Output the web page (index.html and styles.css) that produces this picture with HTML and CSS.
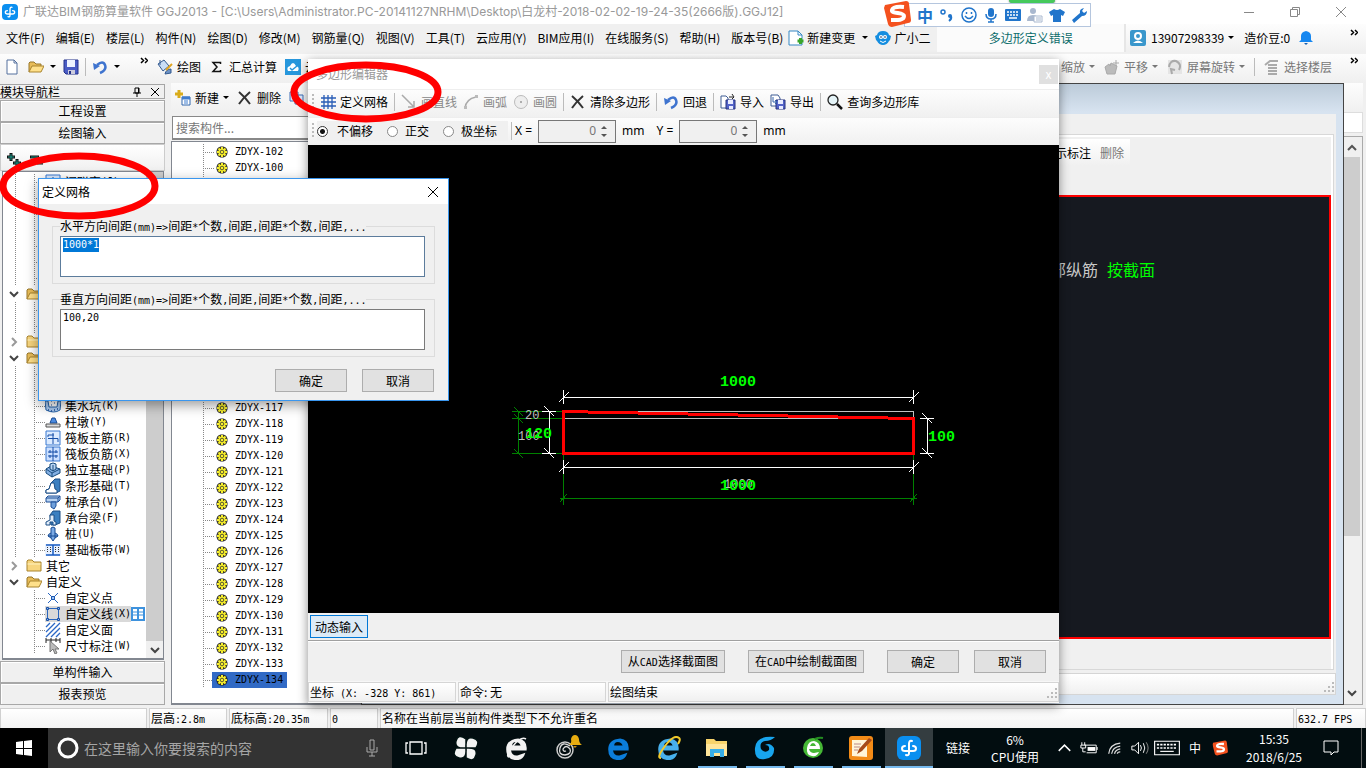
FILE: index.html
```html
<!DOCTYPE html>
<html lang="zh-CN">
<head>
<meta charset="utf-8">
<title>广联达BIM钢筋算量软件 GGJ2013</title>
<link rel="stylesheet" href="styles.css">
</head>
<body>
<svg class="defs" aria-hidden="true">
  <symbol id="gear" viewBox="0 0 16 16"><path d="M8 2.500v11M2.500 8h11M4 4l8 8M12 4l-8 8" stroke="#222" stroke-width="3.600"/><circle cx="8" cy="8" r="4.500" fill="#222"/><path d="M8 3v10M3 8h10M4.500 4.500l7 7M11.500 4.500l-7 7" stroke="#f7ef2c" stroke-width="2"/><circle cx="8" cy="8" r="3.600" fill="#f7ef2c"/><circle cx="8" cy="8" r="1.800" fill="none" stroke="#333" stroke-width=".8"/></symbol>
  <symbol id="fopen" viewBox="0 0 16 16"><path d="M1 13V4l1-1h4l2 2h5v3" fill="#e8bc58" stroke="#97762a"/><path d="M1 13l3-6h12l-3 6z" fill="#ffe08a" stroke="#a9842e"/></symbol>
  <symbol id="fclosed" viewBox="0 0 16 16"><path d="M1 13V3l1-1h4l2 2h7v9z" fill="#f7d57e" stroke="#a9842e"/><path d="M1.500 6h13" stroke="#fff2c0"/></symbol>
  <symbol id="down" viewBox="0 0 10 10"><path d="M1 3l4 4 4-4" fill="none" stroke="#444" stroke-width="2"/></symbol>
  <symbol id="right" viewBox="0 0 10 10"><path d="M3 1l4 4-4 4" fill="none" stroke="#999" stroke-width="2"/></symbol>
  <symbol id="up" viewBox="0 0 10 10"><path d="M1 7l4-4 4 4" fill="none" stroke="#555" stroke-width="2"/></symbol>
  <symbol id="caret" viewBox="0 0 6 4"><path d="M0 0h6L3 3z" fill="currentColor"/></symbol>
  <symbol id="more" viewBox="0 0 8 7"><path d="M1 1l2.500 2.500L1 6M5 1l2.500 2.500L5 6" fill="none" stroke="#000" stroke-width="1.500"/></symbol>
  <symbol id="cross" viewBox="0 0 16 16"><path d="M2 2q6 5 11 12M13 2Q6 8 2 14" fill="none" stroke="#333" stroke-width="2"/></symbol>
  <symbol id="undo" viewBox="0 0 16 16"><path d="M5 6q6-5 8 0t-5 8" fill="none" stroke="#3f74cf" stroke-width="2.500"/><path d="M1 4l1 7 6-4z" fill="#3f74cf"/></symbol>
  <symbol id="disk" viewBox="0 0 16 16"><path d="M1 1h14v14H3l-2-2z" fill="#4a5cc4" stroke="#23308a"/><path d="M4 1h8v7H4z" fill="#eef3ff"/><path d="M5 11h7v4H5z" fill="#ccd"/><path d="M6 12h2v3H6z" fill="#23308a"/></symbol>
  <symbol id="glo" viewBox="0 0 24 24"><rect width="24" height="24" rx="6" fill="#0a8ff0"/><path d="M15 5q-3-1-3 3v9q0 3-3 2M8 10q-3 0-3 2.500T8 15h8q3 0 3-2.500T16 10" fill="none" stroke="#fff" stroke-width="2" stroke-linecap="round"/></symbol>
  <symbol id="pit" viewBox="0 0 16 16"><path d="M0 3h3l1 6h8l1-6h3l-1 9q-6 4-14 0z" fill="#a9c8ee" stroke="#2563a8"/><path d="M3 12h1M6 13h1M9 12h1M12 11h1" stroke="#1b4c96" stroke-width="1.500"/><path d="M6 3h1M9 5h1M6 7h1" stroke="#1b4c96"/></symbol>
  <symbol id="pier" viewBox="0 0 16 16"><path d="M5 9l2-5h3l2 5z" fill="#4c8be0" stroke="#174a93"/><path d="M1 10h14v3H1z" fill="#ddd" stroke="#555"/></symbol>
  <symbol id="rebar" viewBox="0 0 16 16"><path d="M1 1h14v14H1z" fill="#dcebff" stroke="#3878d0"/><path d="M8 3v11M3 7v-2h6M3 8.500h10V12" fill="none" stroke="#164fa8"/></symbol>
  <symbol id="rebar2" viewBox="0 0 16 16"><path d="M1 1h14v14H1z" fill="#cce0ff" stroke="#3878d0"/><path d="M8 1v14M3 6h10M3 10h10M5 4v3M11 9v3M11 4v3M5 9v3" stroke="#164fa8"/></symbol>
  <symbol id="isolated" viewBox="0 0 16 16"><path d="M1 7l5-3 9 3v4l-8 4-6-4z" fill="#82afe3" stroke="#174a7d"/><path d="M1 7l6 4 8-4M7 11v4" fill="none" stroke="#174a7d"/><path d="M5 2l3-1 3 1v5l-3 2-3-2z" fill="#b8d4f3" stroke="#174a7d"/><path d="M8 3v6" stroke="#174a7d"/></symbol>
  <symbol id="strip" viewBox="0 0 16 16"><path d="M1 15v-3l3-1 2-6 4-4h5v12l-4 2z" fill="#3b7fc0" stroke="#1c4f86"/><path d="M1 15v-3l3-1 2-6h3l1 6 2 1v3z" fill="#fff" stroke="#1c4f86"/></symbol>
  <symbol id="beam" viewBox="0 0 16 16"><path d="M5 5l3-4h7v12l-5 2H6z" fill="#3b7fc0" stroke="#1c4f86"/><path d="M1 15v-3l4-2V5h4v6l2 1v3H8v-3H5v3z" fill="#e3eefa" stroke="#1c4f86"/></symbol>
  <symbol id="cap" viewBox="0 0 16 16"><path d="M1 4l2-2h12v4l-2 2H1z" fill="#b7d2f1" stroke="#1c4f98"/><path d="M1 4h12l2-2M13 4v4" fill="none" stroke="#1c4f98"/><path d="M6 8h5v4l-2 3-3-2z" fill="#6fa0dc" stroke="#1c4f98"/></symbol>
  <symbol id="pile" viewBox="0 0 16 16"><path d="M6 2q2-2 4 0v5q3 1 3 3l-3 2-2 3-2-3-3-2q0-2 3-3z" fill="#7aa9e4" stroke="#174a93"/><path d="M6 7v5M10 7v5M3 10h10" stroke="#174a93"/></symbol>
  <symbol id="band" viewBox="0 0 16 16"><path d="M0 2h16v12H0z" fill="#e6f0ff"/><path d="M1 3h14M1 13h14M8 3v10" stroke="#195bc2" stroke-width="1.500"/><path d="M2.500 5v6M5.500 5v6M10.500 5v6M13.500 5v6" stroke="#333" stroke-dasharray="1 1"/></symbol>
  <symbol id="point" viewBox="0 0 16 16"><path d="M3 3l10 10M13 3L3 13" stroke="#2865bf"/><path d="M6.500 6.500h3v3h-3z" fill="#9cc4f5" stroke="#1c57b0"/></symbol>
  <symbol id="poly" viewBox="0 0 16 16"><path d="M2.500 2.500h11v11h-11z" fill="none" stroke="#2b66bd"/><path d="M1.500 1.500h2v2h-2zM12.500 1.500h2v2h-2zM1.500 12.500h2v2h-2zM12.500 12.500h2v2h-2z" fill="#8db8ef" stroke="#174fa5"/></symbol>
  <symbol id="hatch" viewBox="0 0 16 16"><path d="M1 5l4-4M1 10l9-9M1 15L15 1M6 15l9-9M11 15l4-4" stroke="#2a67c5" stroke-width="1.300"/></symbol>
  <symbol id="dim" viewBox="0 0 16 16"><path d="M1 0v5M15 0v5M1 2h14M6 0v4M11 0v4" stroke="#222"/><path d="M5 3v11l3-3 2 5 2-1-2-4h4z" fill="#bbb" stroke="#777"/></symbol>
  <symbol id="sogou" viewBox="0 0 28 28"><path d="M1 5L22 1q3 0 3 3l2 16q0 3-3 3L8 27q-3 0-4-3L0 8z" fill="#f4511e"/><path d="M20 7q-11-1-12 3c-1 4 12 2 12 6 0 5-9 4-13 4" fill="none" stroke="#fff" stroke-width="4"/></symbol>
  <symbol id="ie" viewBox="2 2 20 20"><path d="M20 14H7q1 5 6 4l6-2q-2 7-9 6-7-1-7-9T13 4q8 1 7 10zM8 10h7q-1-3-4-3t-3 3" fill="currentColor" fill-rule="evenodd"/></symbol>
</svg>

<div class="desktop">
<main class="app">
  <header class="titlebar">
    <svg class="i16"><use href="#glo"/></svg>
    <span class="title">广联达BIM钢筋算量软件 GGJ2013 - [C:\Users\Administrator.PC-20141127NRHM\Desktop\白龙村-2018-02-02-19-24-35(2666版).GGJ12]</span>
    <div class="wincontrols">
      <button aria-label="最小化"><svg viewBox="0 0 12 12"><path d="M1 6.500h10"/></svg></button>
      <button aria-label="还原"><svg viewBox="0 0 12 12"><path d="M1.500 3.500h7v7h-7zM3.500 3V1.500h7v7H9"/></svg></button>
      <button aria-label="关闭"><svg viewBox="0 0 12 12"><path d="M1 1l10 10M11 1L1 11"/></svg></button>
    </div>
  </header>

  <nav class="menubar">
    <div class="menus">
      <button>文件(F)</button><button>编辑(E)</button><button>楼层(L)</button><button>构件(N)</button><button>绘图(D)</button><button>修改(M)</button><button>钢筋量(Q)</button><button>视图(V)</button><button>工具(T)</button><button>云应用(Y)</button><button>BIM应用(I)</button><button>在线服务(S)</button><button>帮助(H)</button><button>版本号(B)</button>
    </div>
    <button class="ic"><svg class="i16" viewBox="0 0 16 16"><path d="M1 1h9l4 4v10H1z" fill="#fff" stroke="#3688c4"/><path d="M10 1v4h4" fill="none" stroke="#3688c4"/><path d="M9.500 11h6M12.500 8v6" stroke="#39a52b" stroke-width="3"/></svg>新建变更<svg class="caret"><use href="#caret"/></svg></button>
    <button class="ic"><svg class="i16" viewBox="0 0 16 16"><path d="M0 6l2-1q1-4 6-4t6 4l2 1-1 4-1 1q-2 4-6 4t-6-4l-1-1z" fill="#158ee0"/><circle cx="6" cy="7" r="2" fill="#fff"/><circle cx="10" cy="7" r="2" fill="#fff"/><circle cx="6" cy="7" r=".8" fill="#124"/><circle cx="10" cy="7" r=".8" fill="#124"/><path d="M5 11q3 3 6 0" stroke="#fff" fill="none"/></svg>广小二</button>
    <div class="notice"><a href="#notice">多边形定义错误</a></div>
    <div class="account">
      <svg class="i16" viewBox="0 0 16 16"><rect width="16" height="16" rx="2" fill="#3a97cc"/><circle cx="8" cy="6" r="3" fill="none" stroke="#fff" stroke-width="2"/><path d="M3 13q5-5 10 0z" fill="#fff"/></svg>
      <button>13907298339</button><svg class="caret"><use href="#caret"/></svg><span class="beans">造价豆:0</span>
      <svg class="i16" viewBox="0 0 16 16"><path d="M3 10V6q0-4 5-5 5 1 5 5v4l2 2H1z" fill="#1687f0"/><path d="M6 13h4l-2 2z" fill="#1461b5"/></svg>
      <svg class="more"><use href="#more"/></svg>
    </div>
  </nav>

  <div class="toolbar">
    <svg class="i16" viewBox="0 0 16 16"><path d="M3 1h7l3 3v11H3z" fill="#fff" stroke="#55709e"/><path d="M10 1v3h3" fill="none" stroke="#55709e"/></svg>
    <svg class="i16 tb-open" ><use href="#fopen"/></svg><svg class="caret tb-c"><use href="#caret"/></svg>
    <svg class="i16 tb-save"><use href="#disk"/></svg><i class="sep"></i>
    <svg class="i16 tb-undo"><use href="#undo"/></svg><svg class="caret tb-c"><use href="#caret"/></svg>
    <svg class="more tb-more"><use href="#more"/></svg>
    <button class="ic"><svg class="i16" viewBox="0 0 16 16"><path d="M1 5l6-4 5 6-6 5z" fill="#c9def7" stroke="#32598f"/><path d="M3 1v5M8 15q1-5 6-5v4z" fill="#6d92c5" stroke="#32598f"/><path d="M9 11l6-6" stroke="#e1a521" stroke-width="2"/></svg>绘图</button>
    <button class="ic"><svg class="i16" viewBox="0 0 16 16"><path d="M11.500 5V3.500H4l4 4.500-4 4.500h7.500V11" fill="none" stroke="#111" stroke-width="1.500"/></svg>汇总计算</button>
    <button class="ic"><svg class="i16" viewBox="0 0 16 16"><rect width="16" height="16" fill="#2797dc"/><path d="M3 12q-2-4 2-5 3-6 6 0 4 1 2 5z" fill="#fff"/><path d="M5 9l2 2 5-4" fill="none" stroke="#2797dc" stroke-width="1.500"/></svg>云检查</button>
    <div class="viewtools">
      <button>缩放<svg class="caret"><use href="#caret"/></svg></button>
      <button><svg class="i16" viewBox="0 0 16 16"><path d="M3 15L1 8l4-3 1 2 1-3 6 3-2 8zM12 1v6M9 4h6" fill="#bbb" stroke="#aaa"/></svg>平移<svg class="caret"><use href="#caret"/></svg></button>
      <button><svg class="i16" viewBox="0 0 16 16"><path d="M1 1h14v14H1z" fill="#e5e5e5"/><path d="M2 8q1-7 7-6 6 3 3 9M5 15l-1-5 4 1" fill="none" stroke="#aaa" stroke-width="2"/></svg>屏幕旋转<svg class="caret"><use href="#caret"/></svg></button>
      <i class="sep"></i>
      <button><svg class="i16" viewBox="0 0 16 16"><path d="M1 6l5-4h8M4 6h9M4 9h9M4 12h9M4 15h9" fill="none" stroke="#aaa" stroke-width="2"/></svg>选择楼层</button>
      <svg class="more"><use href="#more"/></svg>
    </div>
  </div>

  <section class="work">
    <aside class="nav">
      <div class="navhead"><h2>模块导航栏</h2><svg class="i10" viewBox="0 0 10 10"><path d="M3 1h4v5H3zM1 6h8M5 6v4M6.500 1v5" fill="none" stroke="#000"/></svg><svg class="i10" viewBox="0 0 10 10"><path d="M1 1l8 8M9 1L1 9" stroke="#000"/></svg></div>
      <button class="bar">工程设置</button>
      <button class="bar">绘图输入</button>
      <div class="treetools"><svg viewBox="0 0 36 16"><path d="M0 5h8M4 1v8M6 11h8M10 7v8M23 5h9M30 11h9" stroke="#111" stroke-width="3"/><path d="M1 5h6M4 2v6M7 11h6M10 8v6M24 5h7M31 11h7" stroke="#169a8a"/></svg></div>
      <div class="treebox">
        <ul class="tree">
          <li class="leaf"><svg><use href="#rebar"/></svg>间联窗<span class="m">(J)</span></li>
          <li class="leaf"></li><li class="leaf"></li><li class="leaf"></li><li class="leaf"></li><li class="leaf"></li><li class="leaf end"></li>
          <li class="branch"><svg class="ch"><use href="#down"/></svg><svg><use href="#fopen"/></svg></li>
          <li class="leaf"></li><li class="leaf end"></li>
          <li class="branch"><svg class="ch"><use href="#right"/></svg><svg><use href="#fclosed"/></svg></li>
          <li class="branch"><svg class="ch"><use href="#down"/></svg><svg><use href="#fopen"/></svg></li>
          <li class="leaf"></li><li class="leaf"></li>
          <li class="leaf"><svg><use href="#pit"/></svg>集水坑<span class="m">(K)</span></li>
          <li class="leaf"><svg><use href="#pier"/></svg>柱墩<span class="m">(Y)</span></li>
          <li class="leaf"><svg><use href="#rebar"/></svg>筏板主筋<span class="m">(R)</span></li>
          <li class="leaf"><svg><use href="#rebar2"/></svg>筏板负筋<span class="m">(X)</span></li>
          <li class="leaf"><svg><use href="#isolated"/></svg>独立基础<span class="m">(P)</span></li>
          <li class="leaf"><svg><use href="#strip"/></svg>条形基础<span class="m">(T)</span></li>
          <li class="leaf"><svg><use href="#cap"/></svg>桩承台<span class="m">(V)</span></li>
          <li class="leaf"><svg><use href="#beam"/></svg>承台梁<span class="m">(F)</span></li>
          <li class="leaf"><svg><use href="#pile"/></svg>桩<span class="m">(U)</span></li>
          <li class="leaf end"><svg><use href="#band"/></svg>基础板带<span class="m">(W)</span></li>
          <li class="branch"><svg class="ch"><use href="#right"/></svg><svg><use href="#fclosed"/></svg>其它</li>
          <li class="branch"><svg class="ch"><use href="#down"/></svg><svg><use href="#fopen"/></svg>自定义</li>
          <li class="leaf last"><svg><use href="#point"/></svg>自定义点</li>
          <li class="leaf last sel"><span class="pick"><svg><use href="#poly"/></svg>自定义线<span class="m">(X)</span></span><svg class="cols" viewBox="0 0 14 14"><path d="M0 0h14v14H0z" fill="#3e92dd"/><path d="M2 2h4v10H2zM8 2h4v10H8z" fill="#fff"/><path d="M2 5h4M2 8h4M8 5h4M8 8h4" stroke="#3e92dd"/></svg></li>
          <li class="leaf last"><svg><use href="#hatch"/></svg>自定义面</li>
          <li class="leaf last end"><svg><use href="#dim"/></svg>尺寸标注<span class="m">(W)</span></li>
        </ul>
        <div class="scroll"><div class="thumb"></div><svg class="i10"><use href="#down"/></svg></div>
      </div>
      <button class="bar">单构件输入</button>
      <button class="bar">报表预览</button>
    </aside>

    <section class="parts">
      <div class="parttools">
        <button class="ic"><svg class="i16" viewBox="0 0 16 16"><path d="M4 0v8M0 4h8" stroke="#d9ac1b" stroke-width="3"/><path d="M7 7h8v8H7z" fill="#fff" stroke="#3166ad"/><path d="M7 8h8" stroke="#3d7cd0" stroke-width="3"/><path d="M9 11h4M9 13h4" stroke="#3d7cd0"/></svg>新建<svg class="caret"><use href="#caret"/></svg></button>
        <button class="ic"><svg class="i16"><use href="#cross"/></svg>删除</button>
        <button class="ic"><svg class="i16" viewBox="0 0 16 16"><path d="M1 2h8v9H1zM6 5h8v9H6z" fill="#dce9fb" stroke="#3d6fb8"/></svg>复制</button>
      </div>
      <input class="search" aria-label="搜索构件" placeholder="搜索构件...">
      <ul class="list">
        <li><svg><use href="#gear"/></svg><span>ZDYX-102</span></li><li><svg><use href="#gear"/></svg><span>ZDYX-100</span></li>
        <li></li><li></li><li></li><li></li><li></li><li></li><li></li><li></li><li></li><li></li><li></li><li></li><li></li><li></li>
        <li><svg><use href="#gear"/></svg><span>ZDYX-117</span></li><li><svg><use href="#gear"/></svg><span>ZDYX-118</span></li>
        <li><svg><use href="#gear"/></svg><span>ZDYX-119</span></li><li><svg><use href="#gear"/></svg><span>ZDYX-120</span></li>
        <li><svg><use href="#gear"/></svg><span>ZDYX-121</span></li><li><svg><use href="#gear"/></svg><span>ZDYX-122</span></li>
        <li><svg><use href="#gear"/></svg><span>ZDYX-123</span></li><li><svg><use href="#gear"/></svg><span>ZDYX-124</span></li>
        <li><svg><use href="#gear"/></svg><span>ZDYX-125</span></li><li><svg><use href="#gear"/></svg><span>ZDYX-126</span></li>
        <li><svg><use href="#gear"/></svg><span>ZDYX-127</span></li><li><svg><use href="#gear"/></svg><span>ZDYX-128</span></li>
        <li><svg><use href="#gear"/></svg><span>ZDYX-129</span></li><li><svg><use href="#gear"/></svg><span>ZDYX-130</span></li>
        <li><svg><use href="#gear"/></svg><span>ZDYX-131</span></li><li><svg><use href="#gear"/></svg><span>ZDYX-132</span></li>
        <li><svg><use href="#gear"/></svg><span>ZDYX-133</span></li><li class="on"><div><svg><use href="#gear"/></svg><span>ZDYX-134</span></div></li>
      </ul>
    </section>

    <section class="child">
      <div class="childbody">
        <div class="group">
          <div class="marks"><span>示标注</span><button>删除</button></div>
          <div class="section-view"><span>部纵筋</span><b>按截面</b></div>
        </div>
        <div class="childstatus"><svg class="grip" viewBox="0 0 12 12"><path d="M9 1h2v2H9zM5 5h2v2H5zM9 5h2v2H9zM1 9h2v2H1zM5 9h2v2H5zM9 9h2v2H9z"/></svg></div>
      </div>
    </section>

    <div class="edge">
      <div class="edge-tools"></div>
      <div class="edge-box"></div>
      <div class="edge-scroll"><svg class="i10"><use href="#up"/></svg><div class="thumb"></div><div class="track"></div><svg class="i10"><use href="#down"/></svg></div>
    </div>
  </section>

  <footer class="status">
    <span class="s0"></span><span class="s1">层高<span class="m">:2.8m</span></span><span class="s2">底标高<span class="m">:20.35m</span></span><span class="s3"><span class="m">0</span></span><span class="s4">名称在当前层当前构件类型下不允许重名</span><span class="s5"><span class="m">632.7 FPS</span></span>
  </footer>
</main>

<footer class="taskbar">
  <button class="start" aria-label="开始"><svg class="i16" viewBox="0 0 16 16"><path d="M0 2l7-1v7H0zM8 1l8-1v8H8zM0 9h7v6l-7-1zM8 9h8v7l-8-1z" fill="#fff"/></svg></button>
  <label class="tsearch"><svg viewBox="0 0 22 22" width="22" height="22"><circle cx="11" cy="11" r="9" fill="none" stroke="#fff" stroke-width="3"/></svg><input placeholder="在这里输入你要搜索的内容" aria-label="搜索"><svg viewBox="0 0 12 18" width="12" height="18"><path d="M4 1h4v10H4zM1 8v5h10V8M6 13v4M3 17h6" fill="none" stroke="#aaa"/></svg></label>
  <button class="w48" aria-label="任务视图"><svg viewBox="0 0 22 16" width="22" height="16"><path d="M5 2h12v12H5zM3 3H1v10h2M19 3h2v10h-2" fill="none" stroke="#fff" stroke-width="1.300"/></svg></button>
  <button class="w51" aria-label="风扇"><svg class="i24" viewBox="0 0 24 24"><path d="M12 12Q0 13 2 5t10-2zM12 12Q11 0 19 2t3 10zM12 12q12-1 10 7t-10 3zM12 12q1 12-7 10T2 12z" fill="#f3f3f3" stroke="#011" stroke-width="1.500"/></svg></button>
  <button class="w51 white" aria-label="浏览器"><svg class="i24" viewBox="0 0 24 24"><use href="#ie"/><path d="M4 21Q0 20 8 10T21 3" fill="none" stroke="currentColor" stroke-width="1.500"/></svg></button>
  <button class="w51" aria-label="消息"><svg viewBox="0 0 30 30" width="30" height="30"><circle cx="12" cy="17" r="8" fill="none" stroke="#ccc" stroke-width="1.500"/><path d="M17 13q-8-5-10 2t5 7q7-1 5-6-4-5-7 0 0 3 3 2" fill="none" stroke="#ddd" stroke-width="1.300"/><path d="M16 12q3-2 2-6 1-4 4-4t4 4q0 4 3 6z" fill="#e7ac10"/><path d="M20 13h4l-2 2z" fill="#c98d0c"/></svg></button>
  <button class="w51 edgeblue" aria-label="Edge"><svg class="i24"><use href="#ie"/></svg></button>
  <button class="w49 ieblue" aria-label="Internet Explorer"><svg class="i24" viewBox="0 0 24 24"><use href="#ie"/><path d="M4 22Q-1 22 8 10T22 2q2 1-1 6" fill="none" stroke="#f1c92b" stroke-width="2"/></svg></button>
  <button class="w48 run" aria-label="文件资源管理器"><svg class="i24" viewBox="0 0 24 24"><path d="M1 3h8l2 2h11v15H1z" fill="#f7d36b"/><path d="M1 8h21v12H1z" fill="#ffe59a"/><path d="M5 13h14v8h-4v-4H9v4H5z" fill="#38aee8"/></svg></button>
  <button class="w48 run" aria-label="广联达"><svg class="i24" viewBox="0 0 24 24"><path d="M22 1Q3-1 2 12t10 11q10-1 9-11-4-6-9-3 5 0 4 5-4 4-8-1-2-7 4-8 6 0 10-4z" fill="#18a5ee"/></svg></button>
  <button class="w48 run green" aria-label="360浏览器"><svg class="i24" viewBox="0 0 24 24"><circle cx="12" cy="12" r="10" fill="#45b735"/><path d="M19 13H8q1 4 5 4l5-1q-2 5-7 4-6-1-5-8t7-7q6 1 6 8zM9 10h6q-1-3-3-3t-3 3" fill="#fff" fill-rule="evenodd"/><path d="M14 3q4-2 8-1" stroke="#238d21" stroke-width="2" fill="none"/></svg></button>
  <button class="w48 run" aria-label="笔记"><svg class="i24" viewBox="0 0 24 24"><rect width="24" height="24" rx="3" fill="#f28b17"/><path d="M3 4h15v17l-15-1z" fill="#fff5d9"/><path d="M5 8h7M5 11h6M5 14h4" stroke="#b88"/><path d="M8 18l2-5L20 2l3 2-10 11z" fill="#a54a19"/></svg></button>
  <button class="w48 run active" aria-label="GGJ2013"><svg class="i24"><use href="#glo"/></svg></button>
  <span class="links">链接</span>
  <span class="cpu">6%<br>CPU使用</span>
  <div class="tray">
    <svg viewBox="0 0 24 16"><path d="M6 11l6-6 6 6" fill="none" stroke="#fff" stroke-width="1.500"/></svg>
    <svg viewBox="0 0 24 16"><path d="M7 5h12v8H9M20 7v3M4 2v3M7 2v3M3 5h5v3H3zM5 8v4h3" fill="none" stroke="#fff"/><path d="M10 7h8v4h-8z" fill="#fff"/></svg>
    <svg viewBox="0 0 24 16"><path d="M6 14Q7 4 18 3M9 14q1-7 9-8M12 14q1-4 6-5M15 14q0-2 3-2" fill="none" stroke="#ddd" stroke-width="1.300"/></svg>
    <svg viewBox="0 0 24 16"><path d="M4 6h3l4-4v12l-4-4H4zM13 5q2 3 0 6M16 3q3 5 0 10" fill="none" stroke="#fff"/><path d="M19 2q4 6 0 12" fill="none" stroke="#888"/></svg>
    <svg class="kb" viewBox="0 0 24 16"><path d="M1 2h22v12H1z" fill="none" stroke="#fff"/><path d="M3 5h18M3 8h18" stroke="#fff" stroke-width="1.500" stroke-dasharray="2 1"/><path d="M6 11h12" stroke="#fff"/></svg>
    <span>中</span>
    <svg viewBox="0 0 28 28"><use href="#sogou"/></svg>
  </div>
  <time class="clock">15:35<br>2018/6/25</time>
  <svg class="notif" viewBox="0 0 16 16"><path d="M1 1h14v11h-4l-3 3v-3H1z" fill="none" stroke="#fff"/></svg>
  <i class="showdesk"></i>
</footer>

<section class="editor">
  <header class="edtitle"><h2>多边形编辑器</h2><button aria-label="关闭">x</button></header>
  <div class="edbar">
    <i class="handle"></i>
    <button class="ic"><svg class="i16" viewBox="0 0 16 16"><path d="M1 4h15M1 8h15M1 12h15M4 1v14M8 1v14M12 1v14" stroke="#285cb6" stroke-width="1.300"/></svg>定义网格</button><i class="sep"></i>
    <button class="ic off"><svg class="i16" viewBox="0 0 16 16"><path d="M1 1l12 12M13 7v6H7" fill="none" stroke="#aaa" stroke-width="1.500"/></svg>画直线</button>
    <button class="ic off"><svg class="i16" viewBox="0 0 16 16"><path d="M2 14Q3 5 13 3" fill="none" stroke="#aaa" stroke-width="1.500"/><path d="M1 12h3v3H1zM12 1h3v3h-3z" fill="#bbb"/></svg>画弧</button>
    <button class="ic off"><svg class="i16" viewBox="0 0 16 16"><circle cx="8" cy="8" r="6.500" fill="#eee" stroke="#bbb"/><circle cx="8" cy="8" r="1" fill="#999"/></svg>画圆</button><i class="sep"></i>
    <button class="ic"><svg class="i16"><use href="#cross"/></svg>清除多边形</button><i class="sep"></i>
    <button class="ic"><svg class="i16"><use href="#undo"/></svg>回退</button><i class="sep"></i>
    <button class="ic"><svg class="i16" viewBox="0 0 16 16"><path d="M1 2h5l2 2v10H1z" fill="#fff" stroke="#3f5d94"/><path d="M6 6h9v9H6z" fill="#5363c8" stroke="#26327f"/><path d="M8 6h5v4H8zM9 12h4v3H9z" fill="#e8ecff"/><path d="M9 3h4M12 0l2 3-2 2" fill="none" stroke="#222"/></svg>导入</button>
    <button class="ic"><svg class="i16" viewBox="0 0 16 16"><path d="M1 1h7l2 3v8H1z" fill="#fff" stroke="#3f5d94"/><path d="M6 6h9v9H6z" fill="#5363c8" stroke="#26327f"/><path d="M8 6h5v4H8zM9 12h4v3H9z" fill="#e8ecff"/><path d="M3 3v5h3M5 6l2 2-2 2" fill="none" stroke="#3464ac"/></svg>导出</button><i class="sep"></i>
    <button class="ic"><svg class="i16" viewBox="0 0 16 16"><circle cx="6" cy="6" r="5" fill="#e5f4f8" stroke="#222" stroke-width="1.300"/><path d="M10 10l5 5" stroke="#111" stroke-width="2.500"/></svg>查询多边形库</button>
  </div>
  <div class="edbar options">
    <i class="handle"></i>
    <div class="radios"><label><input type="radio" name="mode" checked>不偏移</label><label><input type="radio" name="mode">正交</label><label><input type="radio" name="mode">极坐标</label></div>
    <i class="sep"></i>
    <label class="num">X =<span class="spin"><input value="0" disabled><span><svg class="caret flip"><use href="#caret"/></svg><svg class="caret"><use href="#caret"/></svg></span></span>mm</label>
    <label class="num">Y =<span class="spin"><input value="0" disabled><span><svg class="caret flip"><use href="#caret"/></svg><svg class="caret"><use href="#caret"/></svg></span></span>mm</label>
  </div>
  <div class="canvas">
    <svg viewBox="308 145 751 468" preserveAspectRatio="xMidYMid meet">
      <g fill="none" shape-rendering="crispEdges">
        <path stroke="#008000" d="M512 411.500h52M512 418.500h52M512 453.500h52M518.500 411v43M514 407l9 9M514 414l9 9M514 449l9 9M563.500 455v50M913.500 455v50M560 498.500h357M560 502l7-8M910 502l7-8"/>
        <path stroke="#c0c0c0" d="M588 411.500h325.500V419M563 418.500h350"/>
        <path stroke="#fff" d="M563 397.500h351M563.500 390v14M913.500 390v14M559 402l10-10M909 402l10-10M563 467.500h351M563.500 460v14M913.500 460v14M559 472l10-10M909 472l10-10M549.500 411v43M542 411.500h14M542 453.500h14M544 406l10 10M544 448l10 10M927.500 418v36M920 418.500h14M920 453.500h14M922 413l10 10M922 448l10 10"/>
        <path stroke="#f00" stroke-width="3" d="M563.500 455V411.500H588M588 412.500h50M638 413.500h50M688 414.500h50M738 415.500h50M788 416.500h50M838 417.500h50M888 418.500h25.500V453.500H563.500"/>
      </g>
      <g class="gray"><text x="525" y="419">20</text><text x="518" y="440">100</text><text x="724" y="488">1000</text></g>
      <g class="lime"><text x="720" y="386">1000</text><text x="720" y="490">1000</text><text x="525" y="438">120</text><text x="928" y="441">100</text></g>
    </svg>
  </div>
  <div class="dynamic"><button>动态输入</button></div>
  <div class="actions"><button>从<span class="m">CAD</span>选择截面图</button><button>在<span class="m">CAD</span>中绘制截面图</button><button class="std">确定</button><button class="std">取消</button></div>
  <div class="edstatus"><span>坐标<span class="m"> (X: -328 Y: 861)</span></span><span>命令: 无</span><span class="wide">绘图结束<svg class="grip" viewBox="0 0 12 12"><path d="M9 1h2v2H9zM5 5h2v2H5zM9 5h2v2H9zM1 9h2v2H1zM5 9h2v2H5zM9 9h2v2H9z"/></svg></span></div>
</section>

<form class="dialog">
  <header><h2>定义网格</h2><button type="button" aria-label="关闭"><svg viewBox="0 0 12 12"><path d="M1 1l10 10M11 1L1 11" stroke="#000"/></svg></button></header>
  <fieldset><legend><label for="hz">水平方向间距<span class="m">(mm)=&gt;</span>间距<span class="m">*</span>个数<span class="m">,</span>间距<span class="m">,</span>间距<span class="m">*</span>个数<span class="m">,</span>间距<span class="m">,...</span></label></legend><textarea id="hz">1000*1</textarea></fieldset>
  <fieldset><legend><label for="vt">垂直方向间距<span class="m">(mm)=&gt;</span>间距<span class="m">*</span>个数<span class="m">,</span>间距<span class="m">,</span>间距<span class="m">*</span>个数<span class="m">,</span>间距<span class="m">,...</span></label></legend><textarea id="vt">100,20</textarea></fieldset>
  <div class="dlgbtns"><button type="button">确定</button><button type="button">取消</button></div>
</form>

<div class="greentab"></div>
<div class="ime">
  <svg class="imelogo" viewBox="0 0 28 28"><use href="#sogou"/></svg>
  <div class="imebar">
    <b>中</b>
    <svg viewBox="0 0 16 16"><circle cx="4" cy="5" r="2" fill="none" stroke="#2175cb" stroke-width="1.500"/><circle cx="11" cy="9" r="2" fill="#2175cb"/><path d="M12 9q1 3-2 5" stroke="#2175cb" stroke-width="2" fill="none"/></svg>
    <svg viewBox="0 0 16 16"><circle cx="8" cy="8" r="7" fill="none" stroke="#2175cb" stroke-width="1.500"/><path d="M5.500 5v2M10.500 5v2M4 9q4 5 8 0" fill="none" stroke="#2175cb" stroke-width="1.500"/></svg>
    <svg viewBox="0 0 16 16"><rect x="5" y="1" width="6" height="9" rx="3" fill="#2175cb"/><path d="M3 7q0 5 5 5t5-5M8 12v3M5 15h6" fill="none" stroke="#2175cb" stroke-width="1.500"/></svg>
    <svg viewBox="0 0 16 16"><rect y="2" width="16" height="12" rx="1" fill="#2175cb"/><path d="M2 5h12M2 8h12" stroke="#fff" stroke-width="1.500" stroke-dasharray="2 1"/><path d="M4 11h8" stroke="#fff" stroke-width="1.500"/></svg>
    <svg viewBox="0 0 16 16"><circle cx="6" cy="4" r="3" fill="#a9b8cf"/><path d="M0 14q0-6 6-6t6 6z" fill="#a9b8cf"/><path d="M7 9h8v6H7z" fill="#fff" stroke="#a9b8cf"/><path d="M9 11h5M9 13h5" stroke="#a9b8cf"/></svg>
    <svg viewBox="0 0 16 16"><path d="M5 2q3 2 6 0l5 3-2 4-2-1v7H4V8L2 9 0 5z" fill="#2175cb"/></svg>
    <svg viewBox="0 0 16 16"><path d="M1 13L9 6q-1-4 4-5l-2 3 2 2 3-2q0 5-5 5l-8 7z" fill="#2175cb"/></svg>
  </div>
</div>

<svg class="ring ring-a" viewBox="0 0 152 62"><ellipse cx="76" cy="31" rx="72" ry="27"/></svg>
<svg class="ring ring-b" viewBox="0 0 160 68"><ellipse cx="80" cy="34" rx="76" ry="30"/></svg>
</div>
<script src="script.js"></script>
</body>
</html>
```
FILE: script.js
```js
// The grid dialog opens with its first value ready to be replaced.
const firstField = document.getElementById('hz');
firstField.focus();
firstField.select();
```
FILE: styles.css
```css
* { box-sizing: border-box; }
body { margin: 0; font: 12px/16px "Noto Sans CJK SC", "Noto Sans", sans-serif; color: #000; background: #f0f0f0; overflow: hidden; }
button, input, textarea { font: inherit; color: inherit; }
button { background: none; border: 0; padding: 0; white-space: nowrap; }
h2 { font: inherit; margin: 0; }
ul { list-style: none; margin: 0; padding: 0; }
svg { flex: none; display: block; }
.defs { position: absolute; width: 0; height: 0; }
.desktop { position: relative; display: flex; flex-direction: column; height: 100vh; overflow: hidden; }
.m { font: 10px/16px "DejaVu Sans Mono", monospace; white-space: pre; }
.i16 { width: 16px; height: 16px; }
.i24 { width: 24px; height: 24px; }
.i10 { width: 10px; height: 10px; }
.caret { width: 6px; height: 4px; }
.more { width: 8px; height: 7px; }
.sep { flex: none; width: 1px; height: 18px; background: #bbb; }
.ic { display: flex; align-items: center; gap: 4px; }

.app { flex: 1; min-height: 0; display: flex; flex-direction: column; }
.titlebar { height: 24px; display: flex; align-items: center; gap: 5px; padding-left: 2px; background: #fff; color: #999; }
.title { flex: 1; white-space: nowrap; font-family: Inter, "Noto Sans CJK SC", sans-serif; }
.wincontrols { display: flex; gap: 34px; padding-right: 19px; }
.wincontrols svg { width: 12px; height: 12px; fill: none; stroke: #888; }

.menubar { height: 30px; display: flex; align-items: center; background: #f0f0f0; padding-bottom: 2px; }
.menus { display: flex; gap: 11px; padding: 0 5px 0 6px; }
.menubar > .ic { margin-right: 7px; gap: 3px; }
.menubar .caret { margin-left: 4px; }
.notice { flex: 1; height: 28px; display: flex; align-items: center; justify-content: center; background: #fbfbfb; }
.notice a { color: #0c6d6b; text-decoration: none; }
.account { display: flex; align-items: center; width: 242px; height: 28px; padding: 0 8px 0 4px; border-left: 2px solid #e6e6e6; background: linear-gradient(#fdfdfd, #f0f0f0); }
.account button { margin-left: 5px; }
.beans { margin: 0 8px 0 10px; }
.account .more { margin-left: auto; align-self: flex-start; margin-top: 5px; }

.toolbar { height: 29px; display: flex; align-items: center; padding: 0 0 4px 4px; background: linear-gradient(#fdfdfd, #efefef); }
.tb-open { margin-left: 8px; }
.tb-c { margin-left: 6px; }
.tb-save { margin: 0 6px 0 7px; }
.tb-undo { margin-left: 6px; }
.tb-more { margin: 0 9px 12px 20px; }
.toolbar > .ic { margin-right: 8px; }
.viewtools { margin-left: auto; width: 305px; height: 100%; display: flex; align-items: center; gap: 9px; color: #777; padding-right: 8px; }
.viewtools button { display: flex; align-items: center; gap: 4px; }
.viewtools .more { margin: 0 0 12px auto; }

.work { flex: 1; min-height: 0; display: flex; padding-bottom: 3px; }
.nav { width: 165px; flex: none; display: flex; flex-direction: column; background: #f0f0f0; padding-top: 1px; }
.navhead { height: 15px; display: flex; align-items: center; gap: 8px; padding-right: 4px; border: 1px solid #a5a5a5; border-left: 0; line-height: 13px; margin-bottom: 1px; }
.navhead h2 { flex: 1; white-space: nowrap; }
.bar { height: 22px; flex: none; border: 1px solid #a8a8a8; box-shadow: inset 1px 1px #fff; text-align: center; }
.treetools { height: 27px; flex: none; padding: 7px 6px; border: 1px solid #ccc; background: linear-gradient(#fff, #f0f0f0); }
.treetools svg { width: 36px; height: 16px; }
.treebox { flex: 1; min-height: 0; display: flex; margin: 0 1px 1px 2px; border: 1px solid #828790; border-width: 1px 1px 2px; background: #fff; }
.tree { flex: 1; min-width: 0; overflow: hidden; padding-top: 2px; }
.tree li { display: flex; align-items: center; height: 16px; white-space: nowrap; }
.tree svg { width: 16px; height: 16px; }
.tree .ch { width: 10px; height: 10px; margin: 0 7px 0 6px; }
.tree .branch svg + svg { margin-right: 4px; }
.leaf { --dot: linear-gradient(#888 1px, transparent 1px); background: var(--dot) 12px 0 / 1px 2px repeat-y, var(--dot) 31px 0 / 1px 2px repeat-y; padding-left: 31px; }
.leaf.last { background: var(--dot) 31px 0 / 1px 2px repeat-y; }
.leaf::before { content: ""; flex: none; width: 11px; border-top: 1px dotted #888; }
.leaf > svg:first-child, .pick svg { margin-right: 4px; }
.pick { display: flex; align-items: center; background: #d9d9d9; }
.leaf .cols { width: 14px; height: 14px; }
.scroll { flex: none; width: 17px; display: flex; flex-direction: column; align-items: center; background: #f0f0f0; padding-bottom: 3px; }
.scroll .thumb { flex: 1; width: 100%; background: #cdcdcd; margin-bottom: 4px; }

.parts { flex: none; width: 190px; margin-left: 6px; display: flex; flex-direction: column; }
.parttools { height: 29px; display: flex; align-items: center; gap: 8px; padding-left: 4px; background: linear-gradient(#fbfbfb, #f0f0f0); }
.search { height: 24px; margin: 4px 0 1px 1px; border: 2px solid #888; border-width: 1px 1px 2px; background: #fff; padding: 0 3px; }
.search::placeholder { color: #777; opacity: 1; }
.list { flex: 1; min-height: 0; overflow: hidden; background: #fff; border: 1px solid #828790; border-bottom-width: 2px; padding-top: 2px; }
.list li { display: flex; align-items: center; height: 16px; padding-left: 31px; background: linear-gradient(#888 1px, transparent 1px) 31px 0 / 1px 2px repeat-y; font: 10px/16px "DejaVu Sans Mono", monospace; }
.list li::before { content: ""; width: 11px; border-top: 1px dotted #888; }
.list svg { width: 16px; height: 16px; }
.list svg + span { padding-left: 5px; }
.list div { display: flex; width: 75px; margin-left: -2px; background: #316ac5; padding-left: 2px; }

.child { flex: 1; min-width: 0; border: 1px solid #444; padding: 30px 7px 9px; background: linear-gradient(#bccbd9, #d7e3f0 28px); }
.childbody { height: 100%; background: #f0f0f0; display: flex; flex-direction: column; padding-top: 20px; }
.group { flex: 1; min-height: 0; margin-right: 2px; display: flex; flex-direction: column; align-items: flex-end; border: 1px solid #d8d8d8; box-shadow: inset 0 2px #fff, inset -2px 0 #fff; padding: 4px 2px 30px 0; }
.marks { width: 202px; margin-right: 201px; height: 27px; display: flex; align-items: center; justify-content: flex-end; gap: 9px; padding-right: 6px; background: linear-gradient(#fff, #f0f0f0); }
.marks button { color: #777; }
.section-view { flex: 1; width: 100%; margin-top: 29px; background: #161920; border: 2px solid #f00; color: #c8c8c8; font-size: 16px; line-height: 24px; display: flex; justify-content: flex-end; gap: 9px; padding: 60px 174px 0 0; }
.section-view b { font-weight: 400; color: #0f0; }
.childstatus { height: 22px; margin-top: 3px; border: 1px solid #d5d5d5; background: linear-gradient(#fff, #f0f0f0); display: flex; justify-content: flex-end; align-items: flex-end; }
.grip { width: 12px; height: 12px; fill: #bbb; margin: 0 0 1px auto; }
.edge { flex: none; width: 22px; display: flex; flex-direction: column; padding-right: 3px; }
.edge-tools { height: 29px; background: linear-gradient(#fdfdfd, #f0f0f0); }
.edge-box { height: 21px; background: #fff; border: 1px solid #ddd; border-left: 0; margin-bottom: 3px; }
.edge-scroll { flex: 1; display: flex; flex-direction: column; align-items: center; border: 1px solid #aaa; border-left: 0; padding: 6px 2px 6px 0; }
.edge-scroll .thumb { flex: 5; width: 100%; margin-top: 4px; background: #cdcdcd; }
.track { flex: 2; }

.status { height: 21px; flex: none; display: flex; gap: 2px; margin-bottom: -1px; }
.status > span { border: 1px solid #d0d0d0; background: linear-gradient(#fff, #f3f3f3); padding: 1px; white-space: nowrap; }
.s0 { width: 147px; }
.s1 { width: 78px; }
.s2 { width: 99px; }
.s3 { width: 48px; }
.s4 { flex: 1; }
.s5 { width: 70px; }

.taskbar { position: relative; flex: none; height: 40px; display: flex; background: #020d10; color: #fff; }
.taskbar button { display: flex; align-items: center; justify-content: center; }
.start { width: 48px; background: #000; }
.tsearch { width: 344px; display: flex; align-items: center; background: #333; padding: 0 14px 0 9px; gap: 5px; }
.tsearch input { flex: 1; min-width: 0; padding: 0; border: 0; background: none; font-size: 14px; }
.tsearch input::placeholder { color: #a5a5a5; opacity: 1; }
.w48 { width: 48px; }
.w49 { width: 49px; }
.w51 { width: 51px; }
.run { background: linear-gradient(#76b9ed, #76b9ed) center bottom / 39px 2px no-repeat; }
.run.active { background: linear-gradient(#76b9ed, #76b9ed) center bottom / 100% 2px no-repeat #343d40; }
.taskbar .edgeblue { color: #0b7ddb; }
.taskbar .ieblue { color: #47b0ec; }
.taskbar .white { color: #f2f2f2; }
.links { width: 50px; text-align: center; line-height: 40px; }
.cpu { width: 64px; text-align: center; line-height: 17px; padding-top: 3px; }
.tray { display: flex; align-items: center; gap: 2px; margin-left: 6px; }
.tray svg { width: 23px; height: 16px; }
.tray .kb { width: 28px; height: 18px; }
.tray span { width: 24px; text-align: center; }
.clock { width: 84px; text-align: center; line-height: 18px; padding-top: 2px; }
.notif { width: 16px; height: 16px; margin: 12px 0 0 7px; }
.showdesk { margin-left: auto; width: 5px; border-left: 1px solid #666; }

.editor { position: absolute; left: 308px; right: 307px; top: 59px; bottom: 65px; display: flex; flex-direction: column; background: #f0f0f0; box-shadow: 0 3px 10px rgba(0, 0, 0, .45); }
.edtitle { height: 30px; flex: none; display: flex; justify-content: space-between; align-items: center; padding: 0 1px 0 8px; background: #fff; color: #999; }
.edtitle button { width: 19px; height: 19px; background: #e0e0e0; color: #fff; }
.edbar { height: 28px; flex: none; display: flex; align-items: center; gap: 6px; padding: 0 0 3px 4px; background: linear-gradient(#fdfdfd, #f0f0f0); border-top: 1px solid #eee; }
.edbar > * { flex: none; }
.edbar .ic { gap: 4px; }
.handle { width: 2px; height: 16px; background: linear-gradient(#bbb 2px, transparent 2px) 0 0 / 2px 4px; }
.off { color: #888; }
.edbar.options { gap: 3px; padding-bottom: 1px; }
.radios { display: flex; gap: 14px; background: #f0f0f0; padding-right: 11px; }
.radios label { display: flex; align-items: center; gap: 7px; height: 20px; }
.radios label:first-child { gap: 9px; }
.radios input { appearance: none; width: 11px; height: 11px; margin: 0; border: 1px solid #888; border-radius: 50%; background: #fff; }
.radios input:checked { background: radial-gradient(#111 0 2px, #fff 3px); border-color: #333; }
.num { display: flex; align-items: center; gap: 6px; margin-right: 9px; font-size: 12px; font-family: "Noto Sans", sans-serif; }
.spin { display: flex; width: 78px; height: 23px; border: 1px solid #777; background: #f0f0f0; }
.spin input { flex: 1; min-width: 0; border: 0; background: none; text-align: right; color: #777; padding: 0 5px 0 0; }
.spin span { width: 14px; display: flex; flex-direction: column; justify-content: space-between; padding: 4px 0; color: #555; }
.flip { transform: rotate(180deg); }
.canvas { flex: 1; min-height: 0; background: #000; }
.canvas svg { width: 100%; height: 100%; }
.gray { fill: #c0c0c0; font: 12px "Liberation Mono", monospace; }
.lime { fill: #0f0; font: bold 15px "Liberation Mono", monospace; }
.dynamic { height: 28px; flex: none; padding: 2px; border-bottom: 1px solid #a0a0a0; }
.dynamic button { width: 58px; height: 23px; border: 1px solid #0078d7; background: #ddebf7; }
.actions { height: 40px; flex: none; display: flex; align-items: center; justify-content: flex-end; padding-right: 13px; border-top: 1px solid #fff; }
.actions button, .dlgbtns button { height: 23px; border: 1px solid #adadad; background: #e1e1e1; padding: 0 6px; }
.actions button + button { margin-left: 23px; }
.actions .std, .dlgbtns button { width: 72px; }
.actions .std + .std { margin-left: 15px; }
.edstatus { height: 22px; flex: none; display: flex; align-items: flex-end; gap: 2px; padding-bottom: 1px; background: #f7f7f7; }
.edstatus > span { width: 148px; height: 20px; border: 1px solid #d5d5d5; background: linear-gradient(#fff, #f0f0f0); padding: 1px; white-space: nowrap; }
.edstatus .wide { flex: 1; display: flex; align-items: flex-end; padding-right: 0; }

.dialog { position: absolute; left: 38px; top: 178px; width: 411px; border: 1px solid #3a96ee; background: #f0f0f0; box-shadow: 0 4px 12px rgba(0, 0, 0, .4); }
.dialog header { height: 25px; display: flex; justify-content: space-between; align-items: center; padding: 0 9px 0 3px; background: #fff; }
.dialog header svg { width: 12px; height: 12px; }
.dialog fieldset { margin: 14px 13px 0; padding: 0 9px 6px 7px; border: 1px solid #dcdcdc; }
.dialog fieldset + fieldset { margin-top: 7px; }
.dialog legend { padding: 0; height: 16px; white-space: nowrap; }
.dialog textarea { display: block; width: 100%; height: 41px; margin-top: 2px; resize: none; border: 1px solid #7a7a7a; border-radius: 0; outline: 0; background: #fff; padding: 1px 2px; font: 10px/14px "DejaVu Sans Mono", monospace; }
.dialog textarea:focus { border-color: #5c7c9c; }
.dialog textarea::selection { background: #0078d7; color: #fff; }
.dlgbtns { display: flex; justify-content: flex-end; gap: 15px; padding: 12px 14px 8px 0; }

.greentab { position: absolute; left: 1009px; top: 0; width: 46px; height: 3px; border-radius: 0 0 6px 6px; background: #45c95b; box-shadow: 0 0 2px #555; }
.ime { position: absolute; left: 884px; top: 0; display: flex; align-items: flex-start; }
.imelogo { width: 28px; height: 28px; z-index: 1; }
.imebar { display: flex; align-items: center; gap: 6px; height: 24px; margin: 3px 0 0 -8px; padding: 0 3px 0 12px; border: 1px solid #b5c6de; background: #fff; }
.imebar svg { width: 16px; height: 16px; }
.imebar b { font-size: 16px; line-height: 20px; color: #2175cb; }
.ring { position: absolute; fill: none; stroke: #f00; stroke-width: 7px; pointer-events: none; overflow: visible; }
.ring-a { left: 290px; top: 61px; width: 152px; height: 62px; }
.ring-b { left: -1px; top: 152px; width: 160px; height: 68px; }
```
